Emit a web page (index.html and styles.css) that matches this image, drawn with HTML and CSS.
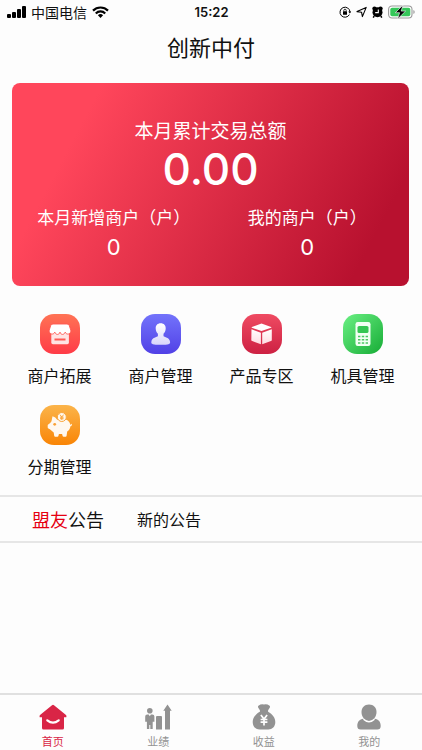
FILE: index.html
```html
<!DOCTYPE html>
<html lang="zh-CN">
<head>
<meta charset="utf-8">
<meta name="viewport" content="width=device-width, initial-scale=1">
<title>创新中付</title>
<link rel="stylesheet" href="styles.css">
</head>
<body>
<div class="app">
  <div class="status">
    <div class="status-side">
      <svg width="19" height="12" viewBox="0 0 19 12" aria-hidden="true"><rect x="0" y="8" width="4" height="4" rx="1"/><rect x="5" y="6" width="4" height="6" rx="1"/><rect x="10" y="3" width="4" height="9" rx="1"/><rect x="15" y="0" width="4" height="12" rx="1"/></svg>
      <span class="carrier">中国电信</span>
      <svg width="17" height="12" viewBox="0 0 17 12" aria-hidden="true"><g fill="none" stroke="#000" stroke-width="2.2"><path d="M1 4.6a10.6 10.6 0 0 1 15 0"/><path d="M3.8 7.4a6.6 6.6 0 0 1 9.4 0"/></g><path d="M8.5 12 5.9 9.3a3.8 3.8 0 0 1 5.2 0z"/></svg>
    </div>
    <time class="clock">15:22</time>
    <div class="status-side status-end">
      <svg width="12" height="12" viewBox="0 0 12 12" aria-hidden="true"><path d="M10.4 8.6A5 5 0 1 1 11 6" fill="none" stroke="#000"/><path d="M9.3 5.6h2.9l-1.4 2z"/><rect x="4" y="5.3" width="4" height="3.4" rx=".5"/><path d="M4.8 5.5V4.4a1.2 1.2 0 0 1 2.4 0v1.1" fill="none" stroke="#000" stroke-width=".8"/></svg>
      <svg width="11" height="12" viewBox="0 0 11 12" aria-hidden="true"><path d="M10.2 1.4 6.4 10.6 5.6 6.3 1 5.6z" fill="none" stroke="#000" stroke-width="1.1" stroke-linejoin="round"/></svg>
      <svg width="11" height="12" viewBox="0 0 11 12" aria-hidden="true"><circle cx="2.5" cy="2.6" r="2.2"/><circle cx="8.5" cy="2.6" r="2.2"/><circle cx="5.5" cy="6.3" r="5"/><path d="m2.2 10-1 1.6M8.800 10l1 1.600" stroke="#000" stroke-width="1.5"/><path d="M6.3 3.4v3.200H3.200" fill="none" stroke="#fff" stroke-width="1.100"/></svg>
      <svg width="28" height="14" viewBox="0 0 28 14" aria-hidden="true"><rect x=".6" y="1" width="23.4" height="12" rx="3.4" fill="#fff" stroke="#999" stroke-width="1.1"/><rect x="2.3" y="2.7" width="20" height="8.6" rx="1.8" fill="#35c759"/><path d="M25.4 5v4a2.2 2.2 0 0 0 0-4z" fill="#999"/><path d="M15 0 7.3 7.7h4.3L9.600 14l8-7.900h-4.400z" stroke="#fff" stroke-width=".6"/></svg>
    </div>
  </div>

  <header class="header"><h1>创新中付</h1></header>

  <main class="main">
    <section class="card">
      <h2 class="card-title">本月累计交易总额</h2>
      <p class="total">0.00</p>
      <dl class="stats">
        <div><dt>本月新增商户（户）</dt><dd>0</dd></div>
        <div><dt>我的商户（户）</dt><dd>0</dd></div>
      </dl>
    </section>

    <nav class="services" aria-label="服务">
      <a class="service" href="#expand">
        <svg class="tile" viewBox="0 0 40 40" aria-hidden="true">
          <defs><linearGradient id="orange-red" x2="0" y2="1"><stop stop-color="#ff7355"/><stop offset="1" stop-color="#ff3b47"/></linearGradient></defs>
          <rect width="40" height="40" rx="14" fill="url(#orange-red)"/>
          <path d="M11.3 19h17.600v9.600a1.600 1.600 0 0 1-1.600 1.600H12.900a1.600 1.600 0 0 1-1.600-1.600z" fill="#ffe4e4"/>
          <path d="M13 10h14q1.700 0 2.300 1.600l1.500 4.600c.5 4-4.300 5.300-5.600 2-1.200 3-4.200 3-5.200 0-1 3-4 3-5.200 0-1.300 3.300-6.100 2-5.600-2l1.500-4.600Q11.300 10 13 10z" fill="#fff" stroke="#ff5850" stroke-width=".9"/>
          <rect x="14.500" y="24.500" width="11" height="2" fill="#ff5a55"/>
        </svg>
        <span>商户拓展</span>
      </a>
      <a class="service" href="#manage">
        <svg class="tile" viewBox="0 0 40 40" aria-hidden="true">
          <defs><linearGradient id="violet" x2="0" y2="1"><stop stop-color="#7373fb"/><stop offset="1" stop-color="#5141e6"/></linearGradient><linearGradient id="lilac" x2="0" y2="1"><stop stop-color="#fff"/><stop offset="1" stop-color="#d9d5fb"/></linearGradient></defs>
          <rect width="40" height="40" rx="14" fill="url(#violet)"/>
          <path d="M19.700 9.300c3.300 0 5.100 2.200 5 5.200 0 2.200-.9 3.900-2.200 5.200v2.300c.5 1.400 6.300 1.100 6.600 6.200 0 1.800-1.100 2.600-9.400 2.600s-9.400-.8-9.400-2.600c.3-5.100 6.100-4.800 6.600-6.200v-2.300c-1.300-1.300-2.200-3-2.200-5.200-.1-3 1.700-5.200 5-5.200z" fill="url(#lilac)"/>
        </svg>
        <span>商户管理</span>
      </a>
      <a class="service" href="#products">
        <svg class="tile" viewBox="0 0 40 40" aria-hidden="true">
          <defs><linearGradient id="crimson" x2="0" y2="1"><stop stop-color="#ef4b62"/><stop offset="1" stop-color="#cd2143"/></linearGradient><linearGradient id="blush" x2="0" y2="1"><stop stop-color="#fff"/><stop offset="1" stop-color="#ffdce2"/></linearGradient></defs>
          <rect width="40" height="40" rx="14" fill="url(#crimson)"/>
          <path d="m19.500 9.500 9.600 3.600q.6.300 0 .6l-9.600 3.400-9.600-3.400q-.6-.3 0-.6z" fill="#fff"/>
          <path d="m9.500 15.300 9.400 3.500v11.500l-8.700-3.200q-.9-.4-.9-1.200zM20.200 18.800l9.600-3.500v10.600q0 .8-.9 1.200l-8.700 3.200z" fill="url(#blush)"/>
        </svg>
        <span>产品专区</span>
      </a>
      <a class="service" href="#devices">
        <svg class="tile" viewBox="0 0 40 40" aria-hidden="true">
          <defs><linearGradient id="green" x1="0" x2="1" y2="1"><stop stop-color="#6af083"/><stop offset="1" stop-color="#17ac36"/></linearGradient></defs>
          <rect width="40" height="40" rx="14" fill="url(#green)"/>
          <rect x="12.500" y="8" width="15" height="24" rx="2.200" fill="#f2fff3"/>
          <rect x="14.500" y="12" width="11" height="7" rx="1.600" fill="#35c653"/>
          <path d="M15 22.500h2.400m1.400 0h2.400m1.400 0H25M15 25.700h2.400m1.400 0h2.400m1.400 0H25M15 28.900h2.400m1.400 0h2.400m1.400 0H25" stroke="#4bc863" stroke-width="1.500"/>
        </svg>
        <span>机具管理</span>
      </a>
      <a class="service" href="#installments">
        <svg class="tile" viewBox="0 0 40 40" aria-hidden="true">
          <defs><linearGradient id="amber" x2="0" y2="1"><stop stop-color="#fbb44a"/><stop offset="1" stop-color="#f98506"/></linearGradient></defs>
          <rect width="40" height="40" rx="14" fill="url(#amber)"/>
          <path d="M12.500 11.300q3.200 1 4.700 3.400c4.200-1.200 8.600-.9 11.100 1.300 1.100 1 1.800 2.300 2.100 3.700q.8.100.7-.8.700-.2.800.5c0 1.200-.6 1.700-1.500 1.800-.2 2.300-1.200 4-3.200 5.200l-.6 4.400q-.1.900-1 .9h-2q-.8 0-1-.8l-.5-1.900h-3.200l-.5 1.900q-.2.800-1 .8h-2.200q-.8 0-1-.9l-.5-3.300-3.800-3.200-1.500-.7q-.8-.4-.7-1.300v-2q0-.8.800-1.100 1.900-.7 3-2.900z" fill="#fff8f0"/>
          <circle cx="14.700" cy="19.300" r="1.400" fill="#faa136"/>
          <circle cx="21.800" cy="12" r="4.500" fill="#fff8ed" stroke="#faa53a"/>
          <path d="m19.900 9.600 1.900 2.400 1.900-2.400M21.800 12v3M20 12.200h3.600M20 13.700h3.600" fill="none" stroke="#fa9f31" stroke-width=".9"/>
        </svg>
        <span>分期管理</span>
      </a>
    </nav>

    <section class="notice">
      <h2><em>盟友</em>公告</h2>
      <a href="#notice">新的公告</a>
    </section>
  </main>

  <nav class="tabs" aria-label="主导航">
    <a class="tab active" href="#home" aria-current="page">
      <svg viewBox="0 0 28 26" aria-hidden="true"><path d="M13 1.200q1-.8 2 0l12 9.800q.8 1 .3 2.300H25V24q0 1.500-1.500 1.500h-19Q3 25.500 3 24V13.300H.7Q.2 12 1 11z"/><path d="M8.300 16.300q5.700 4.500 11.400 0" fill="none" stroke="#fff" stroke-width="2.200" stroke-linecap="round"/></svg>
      <span>首页</span>
    </a>
    <a class="tab" href="#performance">
      <svg viewBox="0 0 28 26" aria-hidden="true"><circle cx="5.800" cy="6.800" r="2.800"/><path d="M3.200 10.600h1.500l1.100 1.600 1.100-1.600h1.500q2 0 2 2v5.200H8.700v7.200H6.300v-4H5.300v4H2.900v-7.200H1.200v-5.200q0-2 2-2zM12 13q0-1 1-1h4q1 0 1 1v12.500h-6zM23.500.5l4.200 6.200h-1.700v18.800h-5V6.700h-1.700z"/></svg>
      <span>业绩</span>
    </a>
    <a class="tab" href="#income">
      <svg viewBox="0 0 28 26" aria-hidden="true"><path d="M8.400 1.800q2.800-2 5.600-1.200 2.800-.8 5.600 1.200.9 1-.2 2.500l-1.300 2v1.400C22.500 9.900 25.300 14 25.300 18c0 4.600-3 7.500-7 7.500H9.700c-4 0-7-2.900-7-7.500 0-4 2.800-8.100 7.200-10.300V6.300l-1.300-2q-1.100-1.500-.2-2.500z"/><path d="m10.900 10.900 3.100 4.200 3.100-4.200M14 15v6.500M10.600 15.500h6.800M10.600 18.200h6.800" fill="none" stroke="#fff" stroke-width="1.700"/></svg>
      <span>收益</span>
    </a>
    <a class="tab" href="#me">
      <svg viewBox="0 0 28 26" aria-hidden="true"><path d="M8.500 14.800C4.300 15.300 2.300 18 2.300 22q0 3.500 3.400 3.500h16.600q3.400 0 3.400-3.500c0-4-2-6.700-6.200-7.200-2.200 3.500-8.800 3.500-11 0z"/><path d="M14 .5c4.700 0 7.500 3.300 7.500 7.500 0 4.700-3.400 9-7.500 9s-7.500-4.300-7.500-9C6.500 3.800 9.300.5 14 .5z"/><path d="M8.500 15.300q5.500 5 11 0" fill="none" stroke="#fff" stroke-width="1.500"/></svg>
      <span>我的</span>
    </a>
  </nav>
</div>
</body>
</html>
```

FILE: styles.css
```css
* {
  box-sizing: border-box;
}

body {
  margin: 0;
  background: #fdfdfd;
  color: #111;
  font-family: "Noto Sans CJK SC", sans-serif;
}

h1, h2, p, dl, dd {
  margin: 0;
  font-weight: 400;
}

a {
  color: inherit;
  text-decoration: none;
}

svg {
  display: block;
  flex: none;
}

.app {
  display: flex;
  flex-direction: column;
  min-height: 100vh;
}

.status {
  display: grid;
  grid-template-columns: 1fr auto 1fr;
  align-items: center;
  height: 24px;
  padding: 0 6px 0 7px;
}

.status-side {
  display: flex;
  align-items: center;
  gap: 5px;
}

.status-end {
  justify-content: flex-end;
}

.carrier {
  font-size: 14px;
  line-height: 20px;
}

.clock {
  font-family: Inter, sans-serif;
  font-size: 13px;
  font-weight: 600;
}

.header {
  display: flex;
  align-items: center;
  justify-content: center;
  height: 44px;
}

.header h1 {
  font-size: 22px;
  line-height: 32px;
}

.main {
  flex: 1;
}

.card {
  margin: 15px 13px 0 12px;
  padding: 35px 5px 21px;
  border-radius: 8px;
  background: linear-gradient(118deg, #ff465b 18%, #b8112f 88%);
  color: #fff;
  text-align: center;
}

.card-title {
  font-size: 19px;
  line-height: 24px;
}

.total {
  font-family: Inter, sans-serif;
  font-size: 44px;
  font-weight: 500;
  line-height: 54px;
}

.stats {
  display: grid;
  grid-template-columns: 1fr 1fr;
  padding-top: 9px;
}

.stats dt {
  font-size: 17px;
  line-height: 24px;
  white-space: nowrap;
}

.stats dd {
  font-family: Inter, sans-serif;
  font-size: 22px;
  line-height: 36px;
}

.services {
  display: grid;
  grid-template-columns: repeat(4, 1fr);
  row-gap: 18px;
  padding: 28px 9px 17px;
}

.service {
  display: flex;
  flex-direction: column;
  align-items: center;
  gap: 9px;
  font-size: 16px;
  line-height: 24px;
}

.tile {
  width: 40px;
  height: 40px;
}

.notice {
  display: flex;
  align-items: center;
  gap: 33px;
  padding: 8px 32px;
  border-top: 2px solid #e6e6e6;
  border-bottom: 2px solid #e6e6e6;
  font-size: 16px;
  line-height: 28px;
}

.notice h2 {
  font-size: 18px;
}

.notice em {
  color: #e60012;
  font-style: normal;
}

.tabs {
  display: grid;
  grid-template-columns: repeat(4, 1fr);
  padding: 9px 0 1px;
  border-top: 2px solid #e0e0e0;
}

.tab {
  display: flex;
  flex-direction: column;
  align-items: center;
  gap: 3px;
  color: #929292;
  font-size: 11px;
  line-height: 16px;
}

.tab svg {
  width: 28px;
  height: 26px;
  fill: currentColor;
}

.tab.active {
  color: #d92546;
}
```
